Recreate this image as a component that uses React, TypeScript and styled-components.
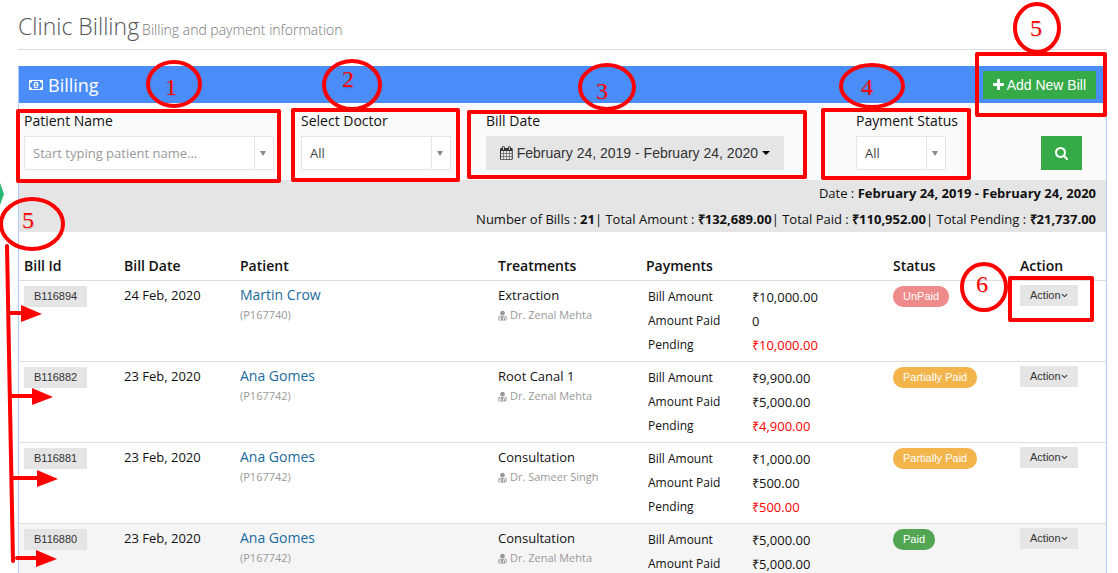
import React from "react";
import styled, { createGlobalStyle } from "styled-components";

const body = `"Open Sans", "Liberation Sans", sans-serif`;
const ui = `"Liberation Sans", Arial, sans-serif`;

const GlobalStyle = createGlobalStyle`
  *, *::before, *::after { box-sizing: border-box; }
  body {
    margin: 0;
    background: #fff;
    color: #111;
    font: 400 13px/20px ${body};
  }
  button, input, select { font: inherit; margin: 0; border-radius: 0; }
`;

const Page = styled.div`
  position: relative;
  height: 100vh;
  overflow: hidden;
  padding: 0 11px 0 18px;
`;

const PageHeader = styled.header`
  display: flex;
  align-items: baseline;
  gap: 3px;
  padding: 10px 0 7px;
  border-bottom: 1px solid #ddd;
  margin-bottom: 16px;
`;

const Title = styled.h1`
  margin: 0;
  font-size: 23px;
  line-height: 32px;
  font-weight: 300;
  color: #555;
`;

const Subtitle = styled.small`
  font-size: 14px;
  font-weight: 300;
  color: #777;
`;

const Panel = styled.section`
  border: 1px solid #b0cdf8;
  border-top: 0;
`;

const PanelHeader = styled.div`
  display: flex;
  align-items: center;
  justify-content: space-between;
  height: 37px;
  padding: 0 10px;
  background: #4b8df8;
  color: #fff;
`;

const PanelTitle = styled.h2`
  display: flex;
  align-items: center;
  gap: 5px;
  margin: 0;
  font-size: 18px;
  font-weight: 400;
`;

const GreenButton = styled.button`
  display: inline-flex;
  align-items: center;
  justify-content: center;
  gap: 3px;
  height: 28px;
  padding: 0 10px;
  border: 0;
  background: #35aa47;
  color: #fff;
  font-family: ${ui};
  font-size: 14px;
`;

const SearchButton = styled(GreenButton)`
  width: 41px;
  height: 34px;
  margin-top: 33px;
`;

const Filters = styled.form`
  display: grid;
  grid-template-columns: 277fr 185fr 370fr 185fr 65fr;
  height: 77px;
  padding-left: 5px;
  background: #fafafa;
`;

const Field = styled.div`
  display: flex;
  flex-direction: column;
  align-items: flex-start;
  gap: 5px;
  padding-top: 8px;
`;

const Label = styled.label`
  font-size: 14px;
`;

const Combo = styled.div<{ $width: number }>`
  position: relative;
  width: ${(p) => p.$width}px;
  height: 34px;
  border: 1px solid #e5e5e5;
  background: #fff;
`;

const comboText = `
  width: 100%;
  height: 100%;
  padding: 0 24px 0 8px;
  border: 0;
  background: transparent;
  color: #444;
  font-size: 13px;
`;

const ComboInput = styled.input`
  ${comboText}
  &::placeholder { color: #999; opacity: 1; }
`;

const ComboSelect = styled.select`
  ${comboText}
  appearance: none;
`;

const ComboArrow = styled.span`
  position: absolute;
  top: 0;
  right: 0;
  bottom: 0;
  width: 19px;
  display: flex;
  align-items: center;
  justify-content: center;
  padding-right: 2px;
  border-left: 1px solid #e5e5e5;
  pointer-events: none;
  &::after {
    content: "";
    border: solid transparent;
    border-width: 5px 3px 0;
    border-top-color: #888;
  }
`;

const DateButton = styled.button`
  display: flex;
  align-items: center;
  gap: 4px;
  width: 298px;
  height: 34px;
  padding: 0 14px;
  border: 0;
  background: #e5e5e5;
  color: #333;
  font-family: ${ui};
  font-size: 14px;
  white-space: nowrap;
  &::after {
    content: "";
    border: solid transparent;
    border-width: 4px 4px 0;
    border-top-color: #000;
  }
`;

const Summary = styled.div`
  padding: 0 10px;
  background: #e5e5e5;
  line-height: 26px;
  text-align: right;
  p { margin: 0; }
`;

const Table = styled.table`
  width: 100%;
  table-layout: fixed;
  border-collapse: separate;
  border-spacing: 0;
`;

const Th = styled.th<{ $width?: number }>`
  width: ${(p) => (p.$width ? `${p.$width}px` : "auto")};
  height: 49px;
  padding: 0 5px 4px;
  border-bottom: 1px solid #ddd;
  vertical-align: bottom;
  text-align: left;
  font-size: 14px;
  font-weight: 600;
`;

const Row = styled.tr<{ $active?: boolean }>`
  background: ${(p) => (p.$active ? "#f5f5f5" : "#fff")};
`;

const Td = styled.td`
  height: 81px;
  padding: 4px 5px;
  border-bottom: 1px solid #ddd;
  vertical-align: top;
`;

const Lines = styled.div`
  display: flex;
  flex-direction: column;
  align-items: flex-start;
`;

const TagLine = styled(Lines)`
  padding-top: 1px;
`;

const PatientLink = styled.a`
  color: #1a6a9c;
  font-size: 14px;
  line-height: 20px;
  text-decoration: none;
`;

const Muted = styled.span`
  display: flex;
  align-items: center;
  gap: 3px;
  color: #999;
  font-size: 11px;
`;

const SmallButton = styled.button`
  display: flex;
  align-items: flex-start;
  height: 21px;
  padding: 0 10px;
  border: 0;
  background: #e5e5e5;
  color: #333;
  font-family: ${ui};
  font-size: 11px;
  svg { margin-top: 7px; }
`;

const Payments = styled.dl`
  display: grid;
  grid-template-columns: 104px 1fr;
  grid-auto-rows: 24px;
  margin: 0;
  padding-left: 2px;
  line-height: 24px;
  dt { font-size: 12px; }
`;

const Amount = styled.dd<{ $due?: boolean }>`
  margin: 0;
  color: ${(p) => (p.$due ? "#f00" : "inherit")};
`;

const statusColors = {
  UnPaid: "#ee8b8b",
  "Partially Paid": "#f2b44b",
  Paid: "#52a552",
};
type Status = keyof typeof statusColors;

const Pill = styled.span<{ $status: Status }>`
  height: 21px;
  padding: 0 10px;
  border-radius: 10px;
  background: ${(p) => statusColors[p.$status]};
  color: #fff;
  font-family: ${ui};
  font-size: 11px;
  line-height: 21px;
`;

const Markup = styled.svg`
  position: absolute;
  top: 0;
  left: 0;
  pointer-events: none;
`;

const Digit = styled.text`
  fill: #f00;
  stroke: none;
  font-family: "Liberation Serif", serif;
  font-size: 24px;
  text-anchor: middle;
  text-shadow: 1px 1px 1px rgba(90, 90, 90, 0.3);
`;

const MoneyIcon = () => (
  <svg width="14" height="14" viewBox="0 0 1792 1792" fill="currentColor" aria-hidden="true">
    <path d="M704 1152h384v-96H960V608H846L698 745l77 80q42-37 55-57h2v288H704v96zm512-256q0 70-21 142t-59.5 134-101.5 101-138 39-138-39-101.5-101T597 1038t-21-142 21-142 59.5-134T758 519t138-39 138 39 101.5 101 59.5 134 21 142zm448 256V640q-106 0-181-75t-75-181H384q0 106-75 181t-181 75v512q106 0 181 75t75 181h1024q0-106 75-181t181-75zm128-832v1152q0 26-19 45t-45 19H64q-26 0-45-19t-19-45V320q0-26 19-45t45-19h1664q26 0 45 19t19 45z" />
  </svg>
);

const PlusIcon = () => (
  <svg width="11" height="11" viewBox="0 0 1408 1408" fill="currentColor" aria-hidden="true">
    <path d="M1408 608v192q0 40-28 68t-68 28H896v416q0 40-28 68t-68 28H608q-40 0-68-28t-28-68V896H96q-40 0-68-28T0 800V608q0-40 28-68t68-28h416V96q0-40 28-68t68-28h192q40 0 68 28t28 68v416h416q40 0 68 28t28 68z" />
  </svg>
);

const SearchIcon = () => (
  <svg width="13" height="13" viewBox="0 0 1664 1664" fill="currentColor" aria-hidden="true">
    <path d="M1152 704q0-185-131.5-316.5T704 256 387.5 387.5 256 704t131.5 316.5T704 1152t316.5-131.5T1152 704zm512 832q0 52-38 90t-90 38q-54 0-90-38l-343-342q-179 124-399 124-143 0-273.5-55.5t-225-150-150-225T0 704t55.5-273.5 150-225 225-150T704 0t273.5 55.5 225 150 150 225T1408 704q0 220-124 399l343 343q37 37 37 90z" />
  </svg>
);

const CalendarIcon = () => (
  <svg width="13" height="14" viewBox="0 0 1664 1792" fill="currentColor" aria-hidden="true">
    <path d="M128 1664h288v-288H128v288zm352 0h320v-288H480v288zM128 1312h288V992H128v320zm352 0h320V992H480v320zM128 928h288V640H128v288zm736 736h320v-288H864v288zM480 928h320V640H480v288zm768 736h288v-288h-288v288zM864 1312h320V992H864v320zM512 448V160q0-13-9.5-22.5T480 128h-64q-13 0-22.5 9.5T384 160v288q0 13 9.5 22.5T416 480h64q13 0 22.5-9.5T512 448zm736 864h288V992h-288v320zM864 928h320V640H864v288zm384 0h288V640h-288v288zm32-480V160q0-13-9.5-22.5T1248 128h-64q-13 0-22.5 9.5T1152 160v288q0 13 9.5 22.5t22.5 9.5h64q13 0 22.5-9.5t9.5-22.5zm384-64v1280q0 52-38 90t-90 38H128q-52 0-90-38t-38-90V384q0-52 38-90t90-38h128v-96q0-66 47-113T416 0h64q66 0 113 47t47 113v96h384v-96q0-66 47-113t113-47h64q66 0 113 47t47 113v96h128q52 0 90 38t38 90z" />
  </svg>
);

const DoctorIcon = () => (
  <svg width="9" height="11" viewBox="0 0 1408 1792" fill="currentColor" aria-hidden="true">
    <path d="M384 1344q0 26-19 45t-45 19-45-19-19-45 19-45 45-19 45 19 19 45zm1024 109q0 121-73 190t-194 69H267q-121 0-194-69T0 1453q0-68 5.500-131t24-138T77 1051.500t81-103T278 888q-22 52-22 120v203q-58 20-93 70t-35 111q0 80 56 136t136 56 136-56 56-136q0-61-35.500-111T384 1211v-203q0-62 25-93 132 104 295 104t295-104q25 31 25 93v64q-106 0-181 75t-75 181v89q-32 29-32 71 0 40 28 68t68 28 68-28 28-68q0-42-32-71v-89q0-52 38-90t90-38 90 38 38 90v89q-32 29-32 71 0 40 28 68t68 28 68-28 28-68q0-42-32-71v-89q0-68-34.500-127.500T1152 1077q0-10 .5-42.500t0-48-2.500-41.500-7-47-13-40q68 15 120 60.500t81 103 47.500 132.500 24 138 5.500 131zM1088 512q0 159-112.500 271.500T704 896 432.500 783.500 320 512t112.500-271.500T704 128t271.500 112.500T1088 512z" />
  </svg>
);

const AngleDown = () => (
  <svg width="7" height="7" viewBox="0 0 8 8" fill="none" stroke="currentColor" strokeWidth="1.2" aria-hidden="true">
    <path d="M1 2.500 L4 5.300 L7 2.500" />
  </svg>
);

interface Bill {
  id: string;
  date: string;
  patient: string;
  patientId: string;
  treatment: string;
  doctor: string;
  amount: string;
  paid: string;
  pending?: string;
  status: Status;
}

const bills: Bill[] = [
  { id: "B116894", date: "24 Feb, 2020", patient: "Martin Crow", patientId: "P167740", treatment: "Extraction", doctor: "Dr. Zenal Mehta", amount: "₹10,000.00", paid: "0", pending: "₹10,000.00", status: "UnPaid" },
  { id: "B116882", date: "23 Feb, 2020", patient: "Ana Gomes", patientId: "P167742", treatment: "Root Canal 1", doctor: "Dr. Zenal Mehta", amount: "₹9,900.00", paid: "₹5,000.00", pending: "₹4,900.00", status: "Partially Paid" },
  { id: "B116881", date: "23 Feb, 2020", patient: "Ana Gomes", patientId: "P167742", treatment: "Consultation", doctor: "Dr. Sameer Singh", amount: "₹1,000.00", paid: "₹500.00", pending: "₹500.00", status: "Partially Paid" },
  { id: "B116880", date: "23 Feb, 2020", patient: "Ana Gomes", patientId: "P167742", treatment: "Consultation", doctor: "Dr. Zenal Mehta", amount: "₹5,000.00", paid: "₹5,000.00", status: "Paid" },
];

const boxes = [
  [18, 111, 261, 70],
  [293, 110, 165, 70],
  [469, 112, 336, 65],
  [823, 110, 146, 68],
  [977, 54, 128, 61],
  [1010, 278, 82, 42],
];

const marks = [
  { n: "1", cx: 174, cy: 84, rx: 26, ry: 22, x: 171, y: 95 },
  { n: "2", cx: 352, cy: 85, rx: 28, ry: 24, x: 348, y: 87 },
  { n: "3", cx: 607, cy: 87, rx: 27, ry: 22, x: 602, y: 99 },
  { n: "4", cx: 872, cy: 86, rx: 31, ry: 21, x: 867, y: 95 },
  { n: "5", cx: 1037, cy: 28, rx: 22, ry: 24, x: 1036, y: 36 },
  { n: "5", cx: 32, cy: 224, rx: 31, ry: 25, x: 28, y: 228 },
  { n: "6", cx: 984, cy: 287, rx: 22, ry: 23, x: 982, y: 292 },
];

const arrows = [
  { from: 9, head: 21, y: 313 },
  { from: 10, head: 32, y: 396 },
  { from: 12, head: 37, y: 478 },
  { from: 17, head: 36, y: 558 },
];

const Annotations = () => (
  <Markup width="1118" height="573" fill="none" stroke="#f00" strokeWidth="4" strokeLinejoin="round" strokeLinecap="round">
    <path d="M0 183 L4 194 L0 205 Z" fill="#2bb673" stroke="none" />
    {boxes.map(([x, y, w, h]) => (
      <rect key={x} x={x} y={y} width={w} height={h} />
    ))}
    {marks.map((m) => (
      <g key={m.cx}>
        <ellipse cx={m.cx} cy={m.cy} rx={m.rx} ry={m.ry} />
        <Digit x={m.x} y={m.y}>{m.n}</Digit>
      </g>
    ))}
    <path d="M7 246 L9.5 380 L13 561" />
    {arrows.map((a) => (
      <g key={a.y}>
        <path d={`M${a.from} ${a.y} H${a.head}`} />
        <path d={`M${a.head} ${a.y - 8} L${a.head + 21} ${a.y + 1} L${a.head} ${a.y + 9} Z`} fill="#f00" stroke="none" />
      </g>
    ))}
  </Markup>
);

export default function App() {
  return (
    <>
      <GlobalStyle />
      <Page>
        <PageHeader>
          <Title>Clinic Billing</Title>
          <Subtitle>Billing and payment information</Subtitle>
        </PageHeader>
        <Panel>
          <PanelHeader>
            <PanelTitle>
              <MoneyIcon />
              Billing
            </PanelTitle>
            <GreenButton type="button">
              <PlusIcon />
              Add New Bill
            </GreenButton>
          </PanelHeader>
          <Filters onSubmit={(e) => e.preventDefault()}>
            <Field>
              <Label htmlFor="patient">Patient Name</Label>
              <Combo $width={250}>
                <ComboInput id="patient" type="text" placeholder="Start typing patient name..." />
                <ComboArrow />
              </Combo>
            </Field>
            <Field>
              <Label htmlFor="doctor">Select Doctor</Label>
              <Combo $width={150}>
                <ComboSelect id="doctor">
                  <option>All</option>
                </ComboSelect>
                <ComboArrow />
              </Combo>
            </Field>
            <Field>
              <Label htmlFor="range">Bill Date</Label>
              <DateButton id="range" type="button">
                <CalendarIcon />
                February 24, 2019 - February 24, 2020
              </DateButton>
            </Field>
            <Field>
              <Label htmlFor="status">Payment Status</Label>
              <Combo $width={90}>
                <ComboSelect id="status">
                  <option>All</option>
                </ComboSelect>
                <ComboArrow />
              </Combo>
            </Field>
            <SearchButton type="submit" aria-label="Search">
              <SearchIcon />
            </SearchButton>
          </Filters>
          <Summary>
            <p>
              Date : <b>February 24, 2019 - February 24, 2020</b>
            </p>
            <p>
              Number of Bills : <b>21</b>| Total Amount : <b>₹132,689.00</b>| Total Paid : <b>₹110,952.00</b>| Total
              Pending : <b>₹21,737.00</b>
            </p>
          </Summary>
          <Table>
            <thead>
              <tr>
                <Th $width={100}>Bill Id</Th>
                <Th $width={116}>Bill Date</Th>
                <Th>Patient</Th>
                <Th $width={148}>Treatments</Th>
                <Th $width={247}>Payments</Th>
                <Th $width={127}>Status</Th>
                <Th $width={91}>Action</Th>
              </tr>
            </thead>
            <tbody>
              {bills.map((b) => (
                <Row key={b.id} $active={b.status === "Paid"}>
                  <Td>
                    <TagLine>
                      <SmallButton type="button">{b.id}</SmallButton>
                    </TagLine>
                  </Td>
                  <Td>
                    <Lines>{b.date}</Lines>
                  </Td>
                  <Td>
                    <Lines>
                      <PatientLink href="#">{b.patient}</PatientLink>
                      <Muted>({b.patientId})</Muted>
                    </Lines>
                  </Td>
                  <Td>
                    <Lines>
                      <span>{b.treatment}</span>
                      <Muted>
                        <DoctorIcon />
                        {b.doctor}
                      </Muted>
                    </Lines>
                  </Td>
                  <Td>
                    <Payments>
                      <dt>Bill Amount</dt>
                      <Amount>{b.amount}</Amount>
                      <dt>Amount Paid</dt>
                      <Amount>{b.paid}</Amount>
                      {b.pending && (
                        <>
                          <dt>Pending</dt>
                          <Amount $due>{b.pending}</Amount>
                        </>
                      )}
                    </Payments>
                  </Td>
                  <Td>
                    <TagLine>
                      <Pill $status={b.status}>{b.status}</Pill>
                    </TagLine>
                  </Td>
                  <Td>
                    <SmallButton type="button">
                      Action
                      <AngleDown />
                    </SmallButton>
                  </Td>
                </Row>
              ))}
            </tbody>
          </Table>
        </Panel>
        <Annotations />
      </Page>
    </>
  );
}
